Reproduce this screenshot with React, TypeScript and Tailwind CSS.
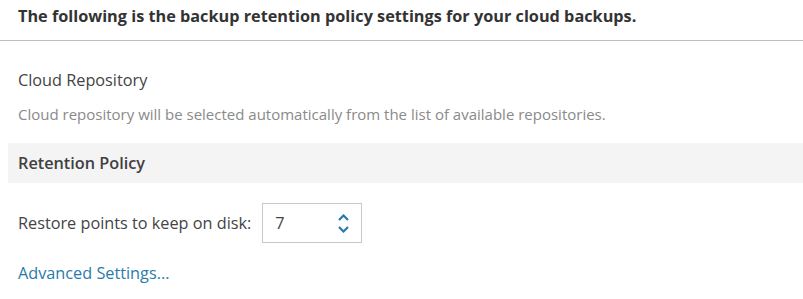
import React from "react";

export default function App() {
  return (
    <div className="w-[803px] h-[299px] bg-white overflow-hidden text-[#404040]" style={{ fontFamily: '"Open Sans", sans-serif' }}>
      <div className="h-[41px] pt-[6px] pl-[18px] border-b border-[#bdbdbd]">
        <div className="text-[16.25px] leading-[20px] font-bold text-[#333]">The following is the backup retention policy settings for your cloud backups.</div>
      </div>
      <div className="pl-[18px] pt-[28px]">
        <div className="text-[16.25px] leading-[22px] text-[#444]">Cloud Repository</div>
        <div className="text-[15px] leading-[20px] text-[#8a8a8a] mt-[13px]">Cloud repository will be selected automatically from the list of available repositories.</div>
      </div>
      <div className="ml-[8px] mt-[19px] h-[40px] bg-[#f4f4f4] flex items-center pl-[10px]">
        <span className="text-[16.25px] leading-[22px] font-semibold text-[#404040]">Retention Policy</span>
      </div>
      <div className="flex items-center pl-[18px] mt-[20px] h-[40px]">
        <span className="text-[16.25px] leading-[22px] text-[#444]">Restore points to keep on disk:</span>
        <div className="ml-[11px] w-[100px] h-[40px] border border-[#c8c8c8] flex items-center justify-between pl-[12px] pr-[12px]">
          <span className="text-[16.25px] text-[#444]">7</span>
          <div className="flex flex-col items-center gap-[5px]">
            <svg width="11" height="7" viewBox="0 0 11 7"><path d="M1 6L5.5 1.5L10 6" fill="none" stroke="#2a7bac" strokeWidth="2.2" /></svg>
            <svg width="11" height="7" viewBox="0 0 11 7"><path d="M1 1L5.5 5.5L10 1" fill="none" stroke="#2a7bac" strokeWidth="2.2" /></svg>
          </div>
        </div>
      </div>
      <div className="pl-[18px] mt-[18px]">
        <span className="text-[16.25px] leading-[22px] text-[#2a7bac]">Advanced Settings...</span>
      </div>
    </div>
  );
}
